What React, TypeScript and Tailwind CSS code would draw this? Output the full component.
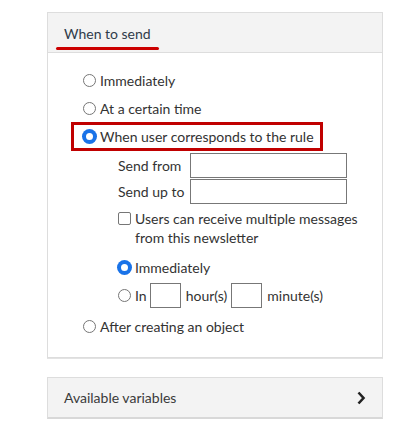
import { ReactNode } from "react";

const Radio = ({ checked = false }: { checked?: boolean }) => (
  checked ? (
    <span className="box-border inline-block h-[13px] w-[13px] shrink-0 rounded-full border-[3px] border-[#1a73e8] bg-white ring-1 ring-[#1a73e8]" />
  ) : (
    <span className="box-border inline-block h-[13px] w-[13px] shrink-0 rounded-full border border-[#767676] bg-white" />
  )
)

const Option = ({ checked, children }: { checked?: boolean; children: ReactNode }) => (
  <div className="flex h-[28px] items-center gap-[4px]">
    <Radio checked={checked} />
    <span>{children}</span>
  </div>
)

const Field = ({ label }: { label: string }) => (
  <div className="flex h-[26px] items-center">
    <span className="w-[72px]">{label}</span>
    <span className="h-[25px] w-[157px] border border-[#777] bg-white" />
  </div>
)

const App = () => {
  return (
    <div className="min-h-[427px] bg-white pt-[12px] pl-[47px] text-[14px] text-[#333]" style={{ fontFamily: "Lato, 'Open Sans', sans-serif" }}>
      <div className="w-[336px] border border-[#ddd] shadow-[0_1px_0_#e3e3e3]">
        <div className="flex h-[40px] items-center border-b border-[#ddd] bg-[#f3f3f3] pl-[8px]">
          <span className="relative px-[8px] pt-[2px] text-[#2f3b4a]">
            When to send
            <span className="absolute -bottom-[6px] left-0 right-0 h-[3px] rounded-full bg-[#c00]" />
          </span>
        </div>
        <div className="bg-white pt-[13px] pb-[17px] pl-[35px]">
          <Option>Immediately</Option>
          <Option>At a certain time</Option>
          <div className="-ml-[12px] inline-flex h-[29px] items-center gap-[4px] border-[3px] border-[#c00000] pl-[9px] pr-[6px]">
            <Radio checked />
            <span>When user corresponds to the rule</span>
          </div>
          <div className="pl-[35px] pt-[1px]">
            <Field label="Send from" />
            <Field label="Send up to" />
            <div className="flex gap-[4px] pt-[5px] leading-[19px]">
              <span className="mt-[3px] box-border h-[13px] w-[13px] shrink-0 rounded-[2px] border border-[#767676] bg-white" />
              <span>Users can receive multiple messages<br />from this newsletter</span>
            </div>
            <div className="pt-[6px]">
              <Option checked>Immediately</Option>
              <div className="flex h-[28px] items-center">
                <Radio />
                <span className="ml-[4px]">In</span>
                <span className="ml-[3px] h-[25px] w-[31px] border border-[#777] bg-white" />
                <span className="ml-[5px]">hour(s)</span>
                <span className="ml-[4px] h-[25px] w-[31px] border border-[#777] bg-white" />
                <span className="ml-[5px]">minute(s)</span>
              </div>
            </div>
          </div>
          <div className="pt-[3px]">
            <Option>After creating an object</Option>
          </div>
        </div>
      </div>
      <div className="mt-[19px] flex h-[42px] w-[336px] items-center justify-between border border-[#ddd] border-b-2 border-b-[#d8d8d8] bg-[#f3f3f3] pl-[16px] pr-[16px] text-[#3a3a3a]">
        <span>Available variables</span>
        <svg width="10" height="14" viewBox="0 0 10 14">
          <path d="M2.5 1.5 L7.5 7 L2.5 12.5" fill="none" stroke="#222" strokeWidth="2.6" />
        </svg>
      </div>
    </div>
  )
}

export default App
